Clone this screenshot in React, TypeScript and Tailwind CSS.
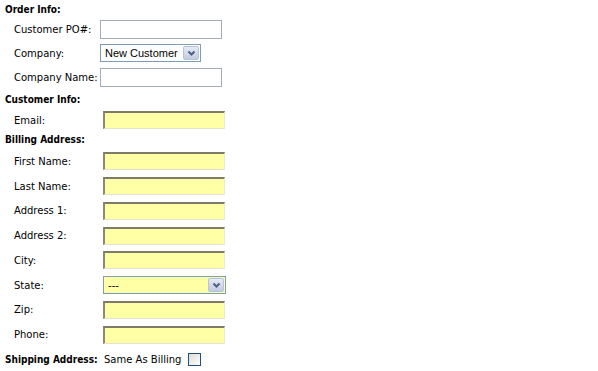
import React from "react";

const lbl = "pl-[14px] text-[10px] text-black";
const head = "pl-[5px] text-[10px] font-bold text-black";
const headFont = { fontFamily: '"DejaVu Sans Condensed", "DejaVu Sans", sans-serif' };

function Chevron() {
  return (
    <svg width="9" height="7" viewBox="0 0 9 7">
      <polyline points="1.5,1.5 4.5,4.5 7.5,1.5" fill="none" stroke="#4d6185" strokeWidth="2" />
    </svg>
  );
}

function SelBtn() {
  return (
    <div className="w-[16px] h-full flex items-center justify-center bg-gradient-to-b from-[#e6eaf5] to-[#c3cbe0] border border-[#b8c3da] rounded-[2px]">
      <Chevron />
    </div>
  );
}

function YInput() {
  return (
    <div className="ml-[89px] w-[122px] h-[18px] bg-[#ffffa6] border-t-2 border-l-2 border-t-[#7e7a68] border-l-[#8c8874] border-b border-r border-b-[#e4e2d0] border-r-[#ece9d8]" />
  );
}

function WInput() {
  return <div className="w-[122px] h-[19px] bg-white border border-[#a5acb2]" />;
}

function Row({ label, h, children }: { label: string; h: string; children: React.ReactNode }) {
  return (
    <div className={`flex items-center ${h}`}>
      <div className={`${lbl} w-[100px] shrink-0`} style={{ paddingLeft: 14 }}>
        {label}
      </div>
      {children}
    </div>
  );
}

function BRow({ label, children }: { label: string; children?: React.ReactNode }) {
  return (
    <div className="flex items-center h-[24.75px]">
      <div className={`${lbl} w-[14px] shrink-0 whitespace-nowrap`}>{label}</div>
      {children ?? <YInput />}
    </div>
  );
}

export default function App() {
  return (
    <div
      className="w-[598px] h-[371px] bg-white overflow-hidden"
      style={{ fontFamily: '"DejaVu Sans", Verdana, sans-serif' }}
    >
      <div className="flex items-center h-[17px] pt-[2px]">
        <div className={head} style={headFont}>Order Info:</div>
      </div>
      <Row label="Customer PO#:" h="h-[24px]">
        <WInput />
      </Row>
      <Row label="Company:" h="h-[24px]">
        <div className="w-[101px] h-[18px] bg-white border border-[#7f9db9] flex items-center p-[1px]">
          <div
            className="flex-1 pl-[3px] text-[11px] text-black leading-none"
            style={{ fontFamily: '"Liberation Sans", Arial, sans-serif' }}
          >
            New Customer
          </div>
          <SelBtn />
        </div>
      </Row>
      <Row label="Company Name:" h="h-[24px]">
        <WInput />
      </Row>
      <div className="flex items-center h-[21px]">
        <div className={head} style={headFont}>Customer Info:</div>
      </div>
      <div className="flex items-center h-[20px]">
        <div className={`${lbl} w-[14px] shrink-0`}>Email:</div>
        <YInput />
      </div>
      <div className="flex items-center h-[19px]">
        <div className={head} style={headFont}>Billing Address:</div>
      </div>
      <BRow label="First Name:" />
      <BRow label="Last Name:" />
      <BRow label="Address 1:" />
      <BRow label="Address 2:" />
      <BRow label="City:" />
      <BRow label="State:">
        <div className="ml-[89px] w-[123px] h-[18px] bg-[#ffffa6] border border-[#7f9db9] flex items-center p-[1px]">
          <div
            className="flex-1 pl-[3px] text-[11px] text-black leading-none"
            style={{ fontFamily: '"Liberation Sans", Arial, sans-serif' }}
          >
            ---
          </div>
          <SelBtn />
        </div>
      </BRow>
      <BRow label="Zip:" />
      <BRow label="Phone:" />
      <div className="flex items-center h-[24px]">
        <div className={`${head} w-[104px] shrink-0`} style={headFont}>
          Shipping Address:
        </div>
        <div className="text-[10px] text-black">Same As Billing</div>
        <div className="ml-[7px] w-[13px] h-[13px] border border-[#1c5180] bg-gradient-to-br from-[#dcdcd7] to-white" />
      </div>
    </div>
  );
}
